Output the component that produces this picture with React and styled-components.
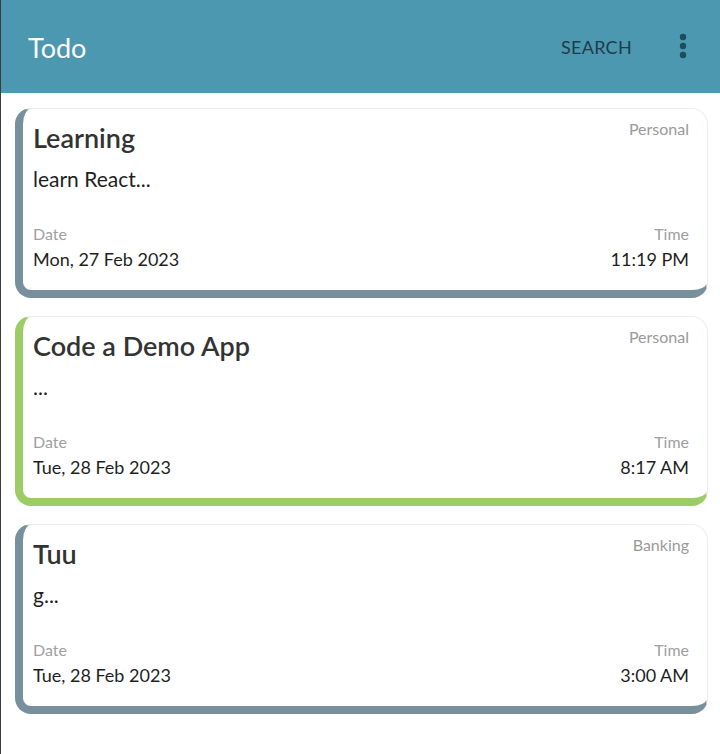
import React from 'react'
import styled, { createGlobalStyle } from 'styled-components'

const GlobalStyle = createGlobalStyle`
    html, body {
        margin: 0;
        padding: 0;
        background: #ffffff;
    }
    body {
        font-family: Lato, "Open Sans", sans-serif;
    }
`;

const todos = [
    { title: 'Learning', note: 'learn React...', category: 'Personal', date: 'Mon, 27 Feb 2023', time: '11:19 PM', color: '#78909c' },
    { title: 'Code a Demo App', note: '...', category: 'Personal', date: 'Tue, 28 Feb 2023', time: '8:17 AM', color: '#9ccc65' },
    { title: 'Tuu', note: 'g...', category: 'Banking', date: 'Tue, 28 Feb 2023', time: '3:00 AM', color: '#78909c' },
];

function MenuIcon() {
    return (
        <svg width="10" height="26" viewBox="0 0 10 26">
            <circle cx="5" cy="4" r="3.2" fill="#1e4b5f" />
            <circle cx="5" cy="13" r="3.2" fill="#1e4b5f" />
            <circle cx="5" cy="22" r="3.2" fill="#1e4b5f" />
        </svg>
    )
}

function App() {
    return (
        <Page>
            <GlobalStyle />
            <AppBar>
                <h1>Todo</h1>
                <div className="actions">
                    <span className="search">SEARCH</span>
                    <MenuIcon />
                </div>
            </AppBar>

            <List>
                {todos.map((t) => (
                    <Card key={t.title} accent={t.color}>
                        <div className="top">
                            <h2>{t.title}</h2>
                            <span className="category">{t.category}</span>
                        </div>
                        <p className="note">{t.note}</p>
                        <div className="meta">
                            <div>
                                <span className="label">Date</span>
                                <span className="value">{t.date}</span>
                            </div>
                            <div className="right">
                                <span className="label">Time</span>
                                <span className="value">{t.time}</span>
                            </div>
                        </div>
                    </Card>
                ))}
            </List>
        </Page>
    )
}

const Page = styled.div`
    width: 100%;
    min-height: 754px;
    border-left: 1px solid #3c3c3c;
    box-sizing: border-box;
    background-color: #ffffff;
`;

const AppBar = styled.header`
    height: 93px;
    background-color: #4b98b0;
    display: flex;
    align-items: center;
    justify-content: space-between;
    padding: 0 32px 0 27px;

    h1 {
        margin: 0;
        font-weight: 400;
        font-size: 27px;
        color: #ffffff;
        margin-top: 2px;
    }

    .actions {
        display: flex;
        align-items: center;
        gap: 46px;

        .search {
            font-size: 18px;
            color: #1d3c4c;
            letter-spacing: 0.3px;
        }

        svg {
            margin-top: -2px;
        }
    }
`;

const List = styled.div`
    display: flex;
    flex-direction: column;
    gap: 18px;
    padding: 15px 12px 0 14px;
`;

const Card = styled.div`
    height: 190px;
    box-sizing: border-box;
    background-color: #ffffff;
    border: 1px solid #ececec;
    border-left: 8px solid ${(p) => p.accent};
    border-bottom: 8px solid ${(p) => p.accent};
    border-radius: 16px;
    padding: 10px 18px 0 10px;
    display: flex;
    flex-direction: column;

    .top {
        display: flex;
        justify-content: space-between;
        align-items: flex-start;

        h2 {
            margin: 2px 0 0 0;
            font-size: 27px;
            line-height: 33px;
            font-weight: 600;
            color: #333333;
        }

        .category {
            font-size: 16px;
            line-height: 19px;
            color: #9a9a9a;
        }
    }

    .note {
        margin: 12px 0 0 0;
        font-size: 21px;
        line-height: 25px;
        color: #1f1f1f;
    }

    .meta {
        margin-top: auto;
        margin-bottom: 20px;
        display: flex;
        justify-content: space-between;

        div {
            display: flex;
            flex-direction: column;
            gap: 5px;
        }

        .right {
            align-items: flex-end;
        }

        .label {
            font-size: 16px;
            line-height: 19px;
            color: #a0a0a0;
        }

        .value {
            font-size: 18px;
            line-height: 22px;
            color: #1f1f1f;
        }
    }
`;

export default App
